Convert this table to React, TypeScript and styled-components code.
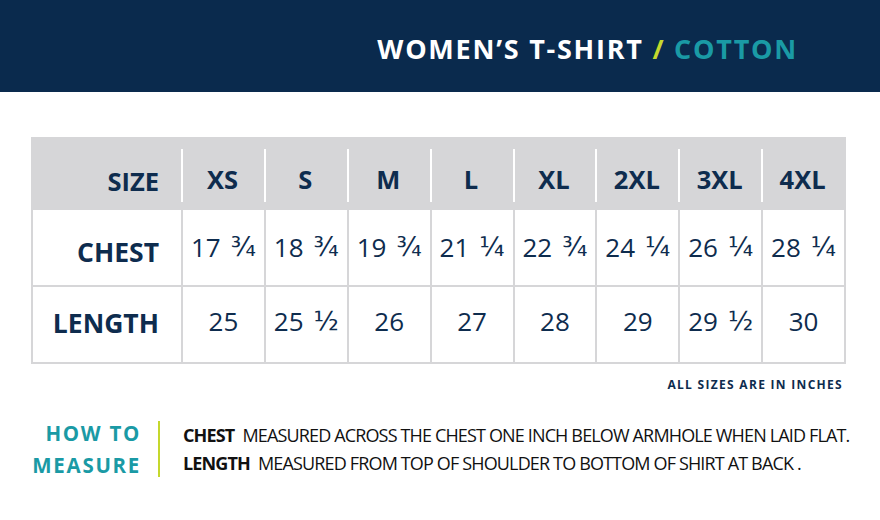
import React from 'react';
import styled, { createGlobalStyle } from 'styled-components';

const GlobalStyle = createGlobalStyle`
  body {
    margin: 0;
    background: #ffffff;
    font-family: 'Open Sans', 'Noto Sans', sans-serif;
  }
`;

const Page = styled.div`
  width: 880px;
  height: 520px;
  background: #ffffff;
  overflow: hidden;
`;

const Banner = styled.header`
  height: 92px;
  background: #0a2a4d;
  display: flex;
  align-items: center;
  justify-content: flex-end;
  padding-right: 82px;
`;

const Title = styled.h1`
  margin: 4px 0 0;
  font-size: 27px;
  font-weight: 700;
  letter-spacing: 1.75px;
  color: #ffffff;
`;

const Slash = styled.span`
  color: #c5d82d;
`;

const Accent = styled.span`
  color: #1a9aa5;
`;

const Chart = styled.div`
  margin: 45px 0 0 31px;
  width: 815px;
  display: grid;
  grid-template-columns: 148px repeat(8, 1fr);
  border: 2px solid #d6d6d8;
  box-sizing: border-box;
`;

const HeadCell = styled.div<{ label?: boolean }>`
  height: 71px;
  background: #d6d6d8;
  display: flex;
  align-items: center;
  justify-content: ${({ label }) => (label ? 'flex-end' : 'center')};
  padding-right: ${({ label }) => (label ? '22px' : '0')};
  padding-top: ${({ label }) => (label ? '12px' : '8px')};
  box-sizing: border-box;
  position: relative;
  font-size: 25.5px;
  font-weight: 700;
  color: #0e2c4e;
  &::before {
    content: '';
    display: ${({ label }) => (label ? 'none' : 'block')};
    position: absolute;
    left: 0;
    top: 10px;
    bottom: 8px;
    width: 2px;
    background: #ffffff;
  }
`;

const RowLabel = styled.div<{ last?: boolean }>`
  height: ${({ last }) => (last ? '75px' : '77px')};
  display: flex;
  align-items: center;
  justify-content: flex-end;
  padding: ${({ last }) => (last ? '0 22px 4px 0' : '8px 22px 0 0')};
  box-sizing: border-box;
  font-size: 26.5px;
  font-weight: 700;
  color: #0e2c4e;
  border-bottom: ${({ last }) => (last ? 'none' : '2px solid #d6d6d8')};
`;

const Value = styled.div<{ last?: boolean }>`
  height: ${({ last }) => (last ? '75px' : '77px')};
  display: flex;
  align-items: center;
  justify-content: center;
  padding-bottom: ${({ last }) => (last ? '8px' : '2px')};
  box-sizing: border-box;
  font-size: 26px;
  color: #0e2c4e;
  border-left: 2px solid #d6d6d8;
  border-bottom: ${({ last }) => (last ? 'none' : '2px solid #d6d6d8')};
`;

const Fraction = styled.span`
  font-family: 'DejaVu Sans', sans-serif;
  font-size: 26px;
  margin-left: 10px;
  vertical-align: -2px;
`;

const Note = styled.div`
  width: 843px;
  margin-top: 12px;
  text-align: right;
  font-size: 12px;
  font-weight: 700;
  letter-spacing: 1.3px;
  color: #0e2c4e;
`;

const Measure = styled.section`
  display: flex;
  align-items: center;
  margin-top: 24px;
`;

const MeasureTitle = styled.div`
  width: 141px;
  text-align: right;
  font-size: 20.5px;
  font-weight: 700;
  letter-spacing: 1.7px;
  line-height: 32px;
  color: #1a9aa5;
`;

const Rule = styled.div`
  width: 2px;
  height: 56px;
  background: #c5d82d;
  margin: 0 23px 0 17px;
`;

const Lines = styled.div`
  display: flex;
  flex-direction: column;
  gap: 4px;
`;

const Line = styled.div`
  font-size: 18px;
  line-height: 24px;
  letter-spacing: -0.85px;
  color: #111111;
  white-space: nowrap;
`;

const Term = styled.b`
  font-weight: 700;
  margin-right: 8px;
`;

const sizes = ['XS', 'S', 'M', 'L', 'XL', '2XL', '3XL', '4XL'];
const rows = [
  { name: 'CHEST', values: ['17 ¾', '18 ¾', '19 ¾', '21 ¼', '22 ¾', '24 ¼', '26 ¼', '28 ¼'] },
  { name: 'LENGTH', values: ['25', '25 ½', '26', '27', '28', '29', '29 ½', '30'] },
];

const Measurement = ({ value }: { value: string }) => {
  const [whole, frac] = value.split(' ');
  return (
    <>
      {whole}
      {frac && <Fraction>{frac}</Fraction>}
    </>
  );
};

const App = () => {
  return (
    <Page>
      <GlobalStyle />
      <Banner>
        <Title>
          WOMEN’S T-SHIRT <Slash>/</Slash> <Accent>COTTON</Accent>
        </Title>
      </Banner>

      <Chart>
        <HeadCell label>SIZE</HeadCell>
        {sizes.map((s) => (
          <HeadCell key={s}>{s}</HeadCell>
        ))}
        {rows.map((row, i) => {
          const last = i === rows.length - 1;
          return (
            <React.Fragment key={row.name}>
              <RowLabel last={last}>{row.name}</RowLabel>
              {row.values.map((v, j) => (
                <Value key={j} last={last}>
                  <Measurement value={v} />
                </Value>
              ))}
            </React.Fragment>
          );
        })}
      </Chart>

      <Note>ALL SIZES ARE IN INCHES</Note>

      <Measure>
        <MeasureTitle>
          HOW TO
          <br />
          MEASURE
        </MeasureTitle>
        <Rule />
        <Lines>
          <Line>
            <Term>CHEST</Term>MEASURED ACROSS THE CHEST ONE INCH BELOW ARMHOLE WHEN LAID FLAT.
          </Line>
          <Line>
            <Term>LENGTH</Term>MEASURED FROM TOP OF SHOULDER TO BOTTOM OF SHIRT AT BACK .
          </Line>
        </Lines>
      </Measure>
    </Page>
  );
};

export default App;
